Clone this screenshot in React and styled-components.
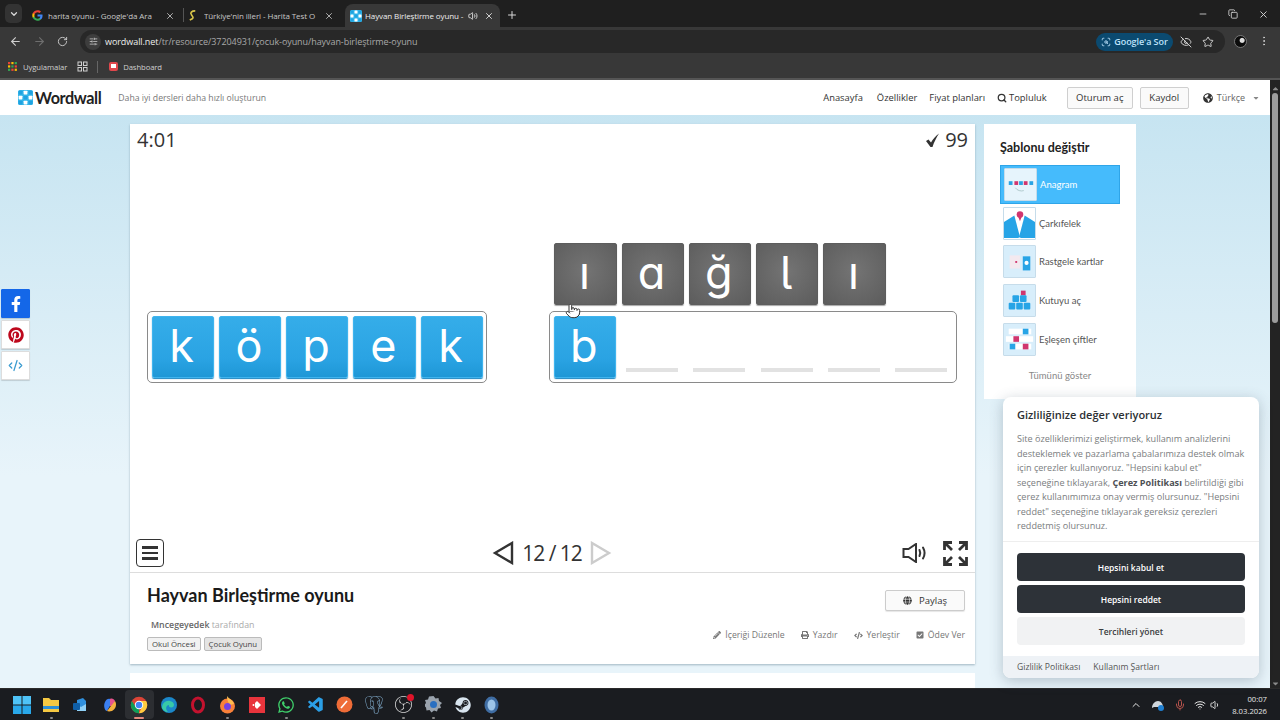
import styled, { createGlobalStyle } from "styled-components";
import {
  ArrowLeft,
  ArrowRight,
  ChevronDown,
  ChevronUp,
  CodeXml,
  Copy,
  EyeOff,
  Mic,
  Minus,
  MoreVertical,
  Plus,
  Pointer,
  RotateCw,
  ScanSearch,
  Search,
  SlidersHorizontal,
  Star,
  Volume1,
  Volume2,
  Wifi,
  X,
} from "lucide-react";
import {
  FaCaretDown,
  FaCaretUp,
  FaCheckSquare,
  FaCode,
  FaFacebookF,
  FaGlobe,
  FaGlobeAmericas,
  FaPencilAlt,
  FaPinterest,
  FaPrint,
  FaSteam,
  FaWhatsapp,
} from "react-icons/fa";
import { SiObsstudio, SiPostgresql } from "react-icons/si";
import { VscVscode } from "react-icons/vsc";

const UI = `"Open Sans", "Noto Sans", "Liberation Sans", sans-serif`;
const ROUND = `Lato, "Open Sans", sans-serif`;

const GlobalStyle = createGlobalStyle`
  html, body {
    margin: 0;
    height: 100%;
    overflow: hidden;
    font-family: ${UI};
  }
  * { box-sizing: border-box; }
`;

const Screen = styled.div`
  width: 1280px;
  height: 720px;
  display: flex;
  flex-direction: column;
  overflow: hidden;
  background: #1c1c1c;
`;

/* browser chrome */
const TabStrip = styled.div`
  height: 27px;
  background: #1f1f1f;
  display: flex;
  align-items: flex-end;
  color: #d8d8d8;
  font-size: 8px;
  letter-spacing: -0.1px;
  padding-left: 5px;
`;

const TabMenu = styled.div`
  width: 17px;
  height: 19px;
  margin-bottom: 4px;
  border-radius: 5px;
  background: #333;
  display: flex;
  align-items: center;
  justify-content: center;
`;

const Tab = styled.div`
  width: ${(p) => p.$width}px;
  height: 23px;
  margin-left: ${(p) => p.$left || 0}px;
  padding: 0 ${(p) => p.$padRight}px 0 ${(p) => p.$pad}px;
  display: flex;
  align-items: center;
  gap: ${(p) => p.$gap || 5}px;
  border-radius: 8px 8px 0 0;
  background: ${(p) => (p.$active ? "#383838" : "transparent")};
  color: ${(p) => (p.$active ? "#eee" : "#c8c8c8")};
`;

const TabTitle = styled.span`
  flex: 1;
  white-space: nowrap;
  overflow: hidden;
`;

const TabDivider = styled.div`
  width: 1px;
  height: 14px;
  margin: 0 0 5px 0;
  background: #555;
`;

const NewTab = styled.div`
  margin: 0 0 6px 6px;
  display: flex;
`;

const WindowButtons = styled.div`
  margin-left: auto;
  margin-bottom: 7px;
  display: flex;
  gap: 20px;
  padding-right: 11px;
`;

const Toolbar = styled.div`
  height: 28px;
  background: #383838;
  display: flex;
  align-items: center;
  color: #cfcfcf;
  padding-left: 9px;
`;

const NavIcons = styled.div`
  width: 71px;
  display: flex;
  gap: 11px;
`;

const Omnibox = styled.div`
  width: 1145px;
  height: 23px;
  margin-top: 1px;
  border-radius: 12px;
  background: #282828;
  display: flex;
  align-items: center;
  padding: 0 11px 0 5px;
  font-size: 9px;
  letter-spacing: -0.07px;
`;

const SiteInfo = styled.div`
  width: 16px;
  height: 16px;
  border-radius: 50%;
  background: #3d3d3d;
  display: flex;
  align-items: center;
  justify-content: center;
  margin-right: 4px;
`;

const Url = styled.span`
  color: #a9a9a9;
  b { color: #eee; font-weight: 400; }
`;

const AskGoogle = styled.div`
  margin-left: auto;
  width: 77px;
  height: 18px;
  border-radius: 9px;
  background: #0b4a70;
  color: #bfe3fb;
  font-size: 9px;
  font-weight: 600;
  display: flex;
  align-items: center;
  justify-content: center;
  gap: 3px;
  margin-right: 7px;
`;

const OmniIcons = styled.div`
  display: flex;
  gap: 10px;
`;

const Profile = styled.div`
  width: 13px;
  height: 13px;
  margin-left: 9px;
  border-radius: 50%;
  background: radial-gradient(circle at 65% 40%, #ddd 0 2px, #0c0c0c 3px);
  border: 1px solid #777;
`;

const BookmarkBar = styled.div`
  height: 25px;
  background: #383838;
  border-bottom: 2px solid #555;
  display: flex;
  align-items: center;
  color: #cfcfcf;
  font-size: 7.7px;
  letter-spacing: -0.1px;
  padding-left: 8px;
`;

const Bookmark = styled.div`
  display: flex;
  align-items: center;
  gap: ${(p) => p.$iconGap || 5}px;
  margin-right: ${(p) => p.$gap || 0}px;
`;

const BookmarkDivider = styled.div`
  width: 1px;
  height: 12px;
  background: #666;
  margin: 0 10px 0 9px;
`;

/* page */
const Viewport = styled.div`
  position: relative;
  flex: 1;
  min-height: 0;
  display: flex;
`;

const Page = styled.div`
  width: 1270px;
  display: flex;
  flex-direction: column;
  background: linear-gradient(180deg, #c6e4f1 5%, #e8f4fa 65%);
  overflow: hidden;
`;

const ScrollTrack = styled.div`
  width: 10px;
  background: #232323;
  display: flex;
  flex-direction: column;
  align-items: center;
  justify-content: space-between;
  color: #8a8a8a;
  padding: 4px 0 0;
`;

const ScrollThumb = styled.div`
  width: 6px;
  height: 230px;
  border-radius: 3px;
  background: #9c9c9c;
`;

const ScrollTop = styled.div`
  display: flex;
  flex-direction: column;
  align-items: center;
`;

const Header = styled.header`
  flex: none;
  height: 35px;
  background: #fff;
  display: flex;
  align-items: center;
  padding: 0 10px 0 18px;
`;

const Logo = styled.div`
  display: flex;
  align-items: center;
  gap: 2px;
  font: 700 16.2px ${ROUND};
  letter-spacing: -0.4px;
  color: #222;
`;

const Tagline = styled.span`
  margin-left: 17px;
  font-size: 8.7px;
  color: #777;
`;

const Nav = styled.nav`
  margin-left: auto;
  display: flex;
  align-items: center;
  font-size: 9.4px;
  color: #333;
`;

const NavLink = styled.a`
  margin-right: ${(p) => p.$gap}px;
  display: flex;
  align-items: center;
  gap: 2px;
`;

const HeaderButton = styled.button`
  height: 22px;
  width: ${(p) => p.$width}px;
  margin-left: ${(p) => p.$left}px;
  border: 1px solid #cfcfcf;
  border-radius: 2px;
  background: #fafafa;
  font: 400 9.5px ${UI};
  color: #333;
  padding: 0;
`;

const Language = styled.div`
  margin-left: 14px;
  display: flex;
  align-items: center;
  gap: 4px;
  font-size: 9px;
  color: #666;
`;

const Main = styled.main`
  flex: 1;
  display: flex;
  gap: 9px;
  padding: 9px 0 0 130px;
  min-height: 0;
`;

const Column = styled.div`
  width: 845px;
  display: flex;
  flex-direction: column;
  gap: 9px;
`;

const Card = styled.section`
  flex: none;
  width: 100%;
  height: 540px;
  background: #fff;
  display: flex;
  flex-direction: column;
  box-shadow: 0 1px 2px rgba(90, 120, 140, 0.5);
`;

const NextCard = styled.div`
  flex: 1;
  background: #fff;
`;

const Game = styled.div`
  height: 449px;
  display: flex;
  flex-direction: column;
  border-bottom: 1px solid #ddd;
`;

const GameTop = styled.div`
  height: 34px;
  padding: 4px 7px 0;
  display: flex;
  justify-content: space-between;
  font: 400 20px/24px ${UI};
  color: #333;
`;

const Score = styled.div`
  display: flex;
  align-items: center;
  gap: 5px;
  height: 24px;
`;

const Stage = styled.div`
  flex: 1;
  display: flex;
  align-items: flex-start;
  gap: 62px;
  padding: 85px 0 0 17px;
`;

const WordBox = styled.div`
  display: flex;
  gap: 5px;
  height: 72px;
  padding: 3.5px 3.5px 3.5px 3.5px;
  border: 1.5px solid #8a8a8a;
  border-radius: 5px;
`;

const LeftWord = styled.div`
  padding-top: 68px;
`;

const RightWord = styled.div`
  position: relative;
  display: flex;
  flex-direction: column;
  gap: 6px;
`;

const LooseLetters = styled.div`
  display: flex;
  gap: 5px;
  padding-left: 5px;
`;

const Tile = styled.div`
  width: 62.25px;
  height: 62px;
  flex: none;
  border-radius: 2px;
  display: flex;
  align-items: center;
  justify-content: center;
  color: #fff;
  font: 400 45px Inter, ${ROUND};
  font-feature-settings: "cv11", "cv05";
  line-height: 1;
  padding: 0 2px 3px 0;
  background: ${(p) =>
    p.$gray
      ? "radial-gradient(circle at 50% 45%, #747474, #5c5c5c)"
      : "linear-gradient(180deg, #35ade9, #2aa3e3 70%, #1e97d6)"};
  border: 1px solid ${(p) => (p.$gray ? "#5d5d5d" : "#3fb4ee")};
  box-shadow: 0 1px 1px ${(p) => (p.$gray ? "rgba(0,0,0,0.35)" : "#1a86c2")};
`;

const Slot = styled.div`
  width: 62.25px;
  height: 62px;
  flex: none;
  display: flex;
  align-items: flex-end;
  justify-content: center;
  padding-bottom: 6px;
  &::after {
    content: "";
    width: 52px;
    height: 4px;
    background: #e2e2e2;
  }
`;

const Cursor = styled(Pointer)`
  position: absolute;
  left: 16px;
  top: 60px;
`;

const Controls = styled.div`
  height: 28px;
  margin-bottom: 5px;
  padding: 0 7px 0 6px;
  display: grid;
  grid-template-columns: 1fr auto 1fr;
  align-items: center;
`;

const MenuButton = styled.div`
  width: 28px;
  height: 28px;
  border: 1.5px solid #333;
  border-radius: 4px;
  display: flex;
  flex-direction: column;
  justify-content: center;
  gap: 3px;
  padding: 0 5px;
  span {
    height: 2.5px;
    background: #333;
  }
`;

const Pager = styled.div`
  display: flex;
  align-items: center;
  gap: 8px;
  font: 400 21px ${UI};
  letter-spacing: -1px;
  color: #333;
`;

const GameIcons = styled.div`
  justify-self: end;
  display: flex;
  align-items: center;
  gap: 15px;
  color: #333;
`;

const Info = styled.div`
  flex: 1;
  display: grid;
  grid-template-columns: 1fr auto;
  grid-template-rows: auto 1fr;
  padding: 11px 10px 13px 17px;
`;

const GameTitle = styled.h1`
  margin: 0;
  font: 700 18px/22px ${ROUND};
  color: #1a1a1a;
`;

const ShareButton = styled.button`
  justify-self: end;
  width: 80px;
  height: 21px;
  margin-top: 6px;
  border: 1px solid #ccc;
  border-radius: 2px;
  background: #fafafa;
  font: 400 9.5px ${UI};
  color: #333;
  display: flex;
  align-items: center;
  justify-content: center;
  gap: 7px;
  box-shadow: 0 1px 1px rgba(0, 0, 0, 0.1);
`;

const Meta = styled.div`
  align-self: end;
`;

const Author = styled.div`
  padding-left: 4px;
  margin-bottom: 6px;
  font-size: 8.8px;
  font-weight: 600;
  color: #666;
  span {
    font-weight: 400;
    color: #aaa;
  }
`;

const Tags = styled.div`
  display: flex;
  gap: 3px;
`;

const TagChip = styled.span`
  height: 14px;
  padding: 0 4px;
  border: 1px solid #bbb;
  border-radius: 2px;
  background: ${(p) => (p.$dark ? "#e4e4e4" : "#f2f2f2")};
  font-size: 7.8px;
  line-height: 12px;
  color: #444;
`;

const Actions = styled.div`
  align-self: end;
  margin-bottom: 10px;
  display: flex;
  gap: 16px;
  font-size: 8.7px;
  color: #777;
`;

const Action = styled.a`
  display: flex;
  align-items: center;
  gap: 4px;
`;

const Sidebar = styled.aside`
  width: 152px;
  height: 275px;
  background: #fff;
  padding: 16px 16px 0;
`;

const SidebarTitle = styled.h2`
  margin: 0 0 9px;
  font: 700 12.5px/16px ${ROUND};
  color: #222;
`;

const TemplateRow = styled.div`
  width: 120px;
  height: 38.8px;
  padding-left: 3px;
  display: flex;
  align-items: center;
  gap: 3px;
  font: 400 9.5px ${ROUND};
  color: ${(p) => (p.$active ? "#fff" : "#555")};
  background: ${(p) => (p.$active ? "#45bbfc" : "transparent")};
  border: ${(p) => (p.$active ? "1px solid #2fa5e8" : "none")};
`;

const Thumb = styled.svg`
  flex: none;
  border: 1px solid #c6dcea;
  border-radius: 1px;
`;

const ShowAll = styled.div`
  width: 120px;
  margin-top: 11px;
  text-align: center;
  font: 400 9.5px ${ROUND};
  color: #888;
`;

const ShareRail = styled.div`
  position: absolute;
  left: 1px;
  top: 209px;
  display: flex;
  flex-direction: column;
  gap: 2px;
`;

const ShareTile = styled.div`
  width: 29px;
  height: 29px;
  display: flex;
  align-items: center;
  justify-content: center;
  background: ${(p) => p.$bg || "#fff"};
  color: ${(p) => p.$color};
  border: 1px solid ${(p) => (p.$bg ? p.$bg : "#ddd")};
  border-radius: 1px;
  box-shadow: 0 1px 1px rgba(0, 0, 0, 0.15);
`;

/* cookie dialog */
const CookieDialog = styled.div`
  position: absolute;
  left: 1003px;
  top: 317px;
  width: 256px;
  height: 281px;
  border-radius: 8px;
  background: #fff;
  overflow: hidden;
  display: flex;
  flex-direction: column;
  box-shadow: 0 3px 14px rgba(60, 80, 100, 0.3);
`;

const CookieBody = styled.div`
  padding: 10px 10px 10px 14px;
  border-bottom: 1px solid #eee;
  height: 145px;
`;

const CookieTitle = styled.h3`
  margin: 0 0 9px;
  font: 600 11px/16px ${UI};
  color: #2c2f33;
`;

const CookieText = styled.p`
  margin: 0;
  font-size: 9.1px;
  line-height: 14.5px;
  white-space: nowrap;
  color: #7a7d80;
  b { color: #4d5054; font-weight: 700; }
`;

const CookieButtons = styled.div`
  padding: 11px 14px 0;
  display: flex;
  flex-direction: column;
  gap: 4px;
`;

const CookieButton = styled.button`
  height: 28px;
  border: none;
  border-radius: 4px;
  background: ${(p) => (p.$light ? "#f1f2f3" : "#2d3238")};
  color: ${(p) => (p.$light ? "#3a3d40" : "#fff")};
  font: 600 8.5px ${UI};
  padding: 0;
`;

const CookieFooter = styled.div`
  margin-top: auto;
  height: 22px;
  background: #eef2f6;
  padding: 0 14px;
  display: flex;
  align-items: center;
  gap: 13px;
  font-size: 8.6px;
  color: #555;
`;

/* taskbar */
const Taskbar = styled.footer`
  flex: none;
  height: 32px;
  background: #1a1c20;
  display: flex;
  align-items: center;
  padding-left: 7px;
  border-top: 1px solid #2a2a2a;
`;

const TaskSlot = styled.div`
  position: relative;
  width: 29.4px;
  height: 29px;
  display: flex;
  align-items: center;
  justify-content: center;
  border-radius: 4px;
  color: ${(p) => p.$color || "#fff"};
  background: ${(p) => (p.$active ? "#2c2e32" : "transparent")};
  &::after {
    content: "";
    position: absolute;
    bottom: 0;
    left: 50%;
    display: ${(p) => (p.$dot ? "block" : "none")};
    width: ${(p) => (p.$active ? 10 : 3)}px;
    height: 2px;
    margin-left: ${(p) => (p.$active ? -5 : -1.5)}px;
    border-radius: 1px;
    background: ${(p) => (p.$active ? "#e58a7c" : "#888")};
  }
`;

const RedBadge = styled.span`
  position: absolute;
  top: 4px;
  right: 4px;
  width: 7px;
  height: 7px;
  border-radius: 50%;
  background: #e0142a;
`;

const Tray = styled.div`
  margin-left: auto;
  display: flex;
  align-items: center;
  color: #e6e6e6;
  padding-right: 13px;
`;

const TrayIcon = styled.div`
  width: ${(p) => p.$width}px;
  display: flex;
  justify-content: center;
`;

const Clock = styled.div`
  margin-left: 11px;
  text-align: right;
  font-size: 7.7px;
  line-height: 12px;
  color: #e6e6e6;
`;

function GoogleMark({ size = 11 }) {
  return (
    <svg width={size} height={size} viewBox="0 0 24 24">
      <path fill="#4285f4" d="M23 12.300c0-.8-.1-1.600-.2-2.300H12v4.400h6.200c-.3 1.400-1.100 2.600-2.300 3.400v2.800h3.700c2.100-2 3.400-4.900 3.400-8.300z" />
      <path fill="#34a853" d="M12 23.500c3.100 0 5.700-1 7.600-2.800l-3.700-2.900c-1 .7-2.300 1.100-3.900 1.100-3 0-5.500-2-6.400-4.800H1.800v3c1.900 3.800 5.800 6.400 10.200 6.400z" />
      <path fill="#fbbc05" d="M5.600 14.100c-.5-1.400-.5-2.900 0-4.300V6.800H1.800c-1.600 3.200-1.600 7.100 0 10.300z" />
      <path fill="#ea4335" d="M12 4.800c1.700 0 3.200.6 4.400 1.700l3.300-3.300C17.700 1.400 15.100.4 12 .4 7.600.4 3.700 3 1.800 6.800l3.800 3C6.500 6.900 9 4.800 12 4.800z" />
    </svg>
  );
}

function WordwallMark({ size = 12 }) {
  const cells = [
    [1, 1, "#1fa2e0"],
    [9, 1, "#fff"],
    [17, 1, "#1fa2e0"],
    [1, 9, "#fff"],
    [9, 9, "#1fa2e0"],
    [17, 9, "#fff"],
    [1, 17, "#1fa2e0"],
    [9, 17, "#fff"],
    [17, 17, "#1fa2e0"],
  ];
  return (
    <svg width={size} height={size} viewBox="0 0 24 24">
      <rect width="24" height="24" rx="3" fill="#35b6ea" />
      {cells.map(([x, y, fill]) => (
        <rect key={`${x}-${y}`} x={x} y={y} width="6" height="6" rx="1" fill={fill} />
      ))}
    </svg>
  );
}

function ChromeMark() {
  return (
    <svg width="18" height="18" viewBox="0 0 24 24">
      <circle cx="12" cy="12" r="11" fill="#db4437" />
      <path fill="#0f9d58" d="M12 23a11 11 0 0 1-9.500-16.500L8 15l4 2z" />
      <path fill="#ffcd40" d="M12 23a11 11 0 0 0 9.500-16.500H12l4 8z" />
      <circle cx="12" cy="12" r="5.600" fill="#fff" />
      <circle cx="12" cy="12" r="4.300" fill="#4285f4" />
    </svg>
  );
}

function TemplateThumb({ kind }) {
  return (
    <Thumb width="33" height="33" viewBox="0 0 33 33">
      <rect width="33" height="33" fill={kind === "anagram" ? "#e6f4fc" : "#d8eefb"} />
      {kind === "anagram" && (
        <>
          {[4, 10, 15, 20, 26].map((x, i) => (
            <rect key={x} x={x} y="13" width="4" height="4" fill={i % 2 ? "#d0366f" : "#2aa3e3"} />
          ))}
          <path d="M11 20c2 3 6 4 9 3" stroke="#8aa" strokeWidth="0.6" fill="none" />
        </>
      )}
      {kind === "wheel" && (
        <>
          <rect width="33" height="33" fill="#fff" />
          <path d="M0 15 11 8l6 23-2 1H0z" fill="#27a4e6" />
          <path d="M33 15 22 8l-6 23 2 1h15z" fill="#27a4e6" />
          <circle cx="17" cy="7" r="3.500" fill="#d0366f" />
          <path d="M15 9l2 5 2-5z" fill="#d0366f" />
        </>
      )}
      {kind === "cards" && (
        <>
          <rect x="6" y="10" width="11" height="14" fill="#f3e9ef" />
          <rect x="12" y="16" width="2" height="2" fill="#d0366f" />
          <rect x="20" y="11" width="8" height="15" fill="#27a4e6" />
          <circle cx="24" cy="18" r="2.200" fill="#fff" />
        </>
      )}
      {kind === "boxes" && (
        <>
          <rect x="18" y="6" width="5" height="5" fill="#d0366f" />
          {[[9, 11], [17, 11], [5, 19], [13, 19], [21, 19]].map(([x, y]) => (
            <rect key={`${x}${y}`} x={x} y={y} width="7" height="7" rx="1" fill="#27a4e6" />
          ))}
        </>
      )}
      {kind === "pairs" && (
        <>
          <rect x="5" y="5" width="24" height="6" fill="#fff" />
          <rect x="2" y="13" width="29" height="6" fill="#fff" />
          <rect x="5" y="21" width="24" height="6" fill="#fff" />
          <rect x="20" y="5" width="6" height="6" fill="#27a4e6" />
          <rect x="10" y="13" width="6" height="6" fill="#d0366f" />
          <rect x="6" y="21" width="6" height="6" fill="#27a4e6" />
          <rect x="20" y="21" width="6" height="6" fill="#d0366f" />
        </>
      )}
    </Thumb>
  );
}

const TEMPLATES = [
  { kind: "anagram", name: "Anagram", active: true },
  { kind: "wheel", name: "Çarkıfelek" },
  { kind: "cards", name: "Rastgele kartlar" },
  { kind: "boxes", name: "Kutuyu aç" },
  { kind: "pairs", name: "Eşleşen çiftler" },
];

export default function App() {
  return (
    <Screen>
      <GlobalStyle />
      <TabStrip>
        <TabMenu>
          <ChevronDown size={10} strokeWidth={3} />
        </TabMenu>
        <Tab $width={157} $left={4} $pad={6} $padRight={8}>
          <GoogleMark />
          <TabTitle>harita oyunu - Google'da Ara</TabTitle>
          <X size={10} />
        </Tab>
        <TabDivider />
        <Tab $width={161} $pad={3} $padRight={11} $gap={6}>
          <svg width="11" height="11" viewBox="0 0 12 12">
            <path d="M9 1C5 1 3 3 5 5.500S8 9 3 11" stroke="#d9c64a" strokeWidth="1.800" fill="none" />
          </svg>
          <TabTitle>Türkiye'nin illeri - Harita Test O</TabTitle>
          <X size={10} />
        </Tab>
        <Tab $width={155} $pad={5} $padRight={6} $gap={3} $active>
          <WordwallMark />
          <TabTitle>Hayvan Birleştirme oyunu -</TabTitle>
          <Volume2 size={10} />
          <X size={10} style={{ marginLeft: 3 }} />
        </Tab>
        <NewTab>
          <Plus size={12} />
        </NewTab>
        <WindowButtons>
          <Minus size={10} />
          <Copy size={10} />
          <X size={11} />
        </WindowButtons>
      </TabStrip>

      <Toolbar>
        <NavIcons>
          <ArrowLeft size={13} />
          <ArrowRight size={13} color="#6e6e6e" />
          <RotateCw size={11} style={{ marginTop: 1 }} />
        </NavIcons>
        <Omnibox>
          <SiteInfo>
            <SlidersHorizontal size={9} />
          </SiteInfo>
          <Url>
            <b>wordwall.net</b>/tr/resource/37204931/çocuk-oyunu/hayvan-birleştirme-oyunu
          </Url>
          <AskGoogle>
            <ScanSearch size={10} />
            Google'a Sor
          </AskGoogle>
          <OmniIcons>
            <EyeOff size={12} />
            <Star size={12} />
          </OmniIcons>
        </Omnibox>
        <Profile />
        <MoreVertical size={12} style={{ marginLeft: 11 }} />
      </Toolbar>

      <BookmarkBar>
        <Bookmark $gap={10}>
          <svg width="10" height="10" viewBox="0 0 9 9">
            {[0, 3, 6].flatMap((x, i) =>
              [0, 3, 6].map((y, j) => (
                <rect
                  key={`${x}${y}`}
                  x={x}
                  y={y}
                  width="2"
                  height="2"
                  fill={["#ea4335", "#fbbc05", "#34a853"][(i + j) % 3]}
                />
              ))
            )}
          </svg>
          Uygulamalar
        </Bookmark>
        <svg width="11" height="11" viewBox="0 0 11 11" fill="none" stroke="#cfcfcf">
          <rect x="1" y="1" width="3.500" height="3.500" />
          <rect x="6.500" y="1" width="3.500" height="3.500" />
          <rect x="1" y="6.500" width="3.500" height="3.500" />
          <rect x="6.500" y="6.500" width="3.500" height="3.500" />
        </svg>
        <BookmarkDivider />
        <Bookmark $iconGap={4}>
          <svg width="11" height="11" viewBox="0 0 11 11">
            <rect x="1" y="1" width="9" height="9" rx="2" fill="#e0474c" />
            <rect x="3" y="3" width="5" height="4" fill="#fff" />
          </svg>
          Dashboard
        </Bookmark>
      </BookmarkBar>

      <Viewport>
        <Page>
          <Header>
            <Logo>
              <WordwallMark size={15} />
              Wordwall
            </Logo>
            <Tagline>Daha iyi dersleri daha hızlı oluşturun</Tagline>
            <Nav>
              <NavLink $gap={14}>Anasayfa</NavLink>
              <NavLink $gap={12}>Özellikler</NavLink>
              <NavLink $gap={12}>Fiyat planları</NavLink>
              <NavLink $gap={0}>
                <Search size={10} strokeWidth={3} />
                Topluluk
              </NavLink>
              <HeaderButton $width={66} $left={20}>Oturum aç</HeaderButton>
              <HeaderButton $width={49} $left={7}>Kaydol</HeaderButton>
              <Language>
                <FaGlobeAmericas size={10} color="#333" />
                Türkçe
                <FaCaretDown size={8} color="#888" style={{ marginLeft: 3 }} />
              </Language>
            </Nav>
          </Header>

          <Main>
            <Column>
              <Card>
                <Game>
                  <GameTop>
                    <span>4:01</span>
                    <Score>
                      <svg width="14" height="14" viewBox="0 0 14 14" fill="#333">
                        <path d="M0 8l2.500-1.500L5 9.500C7 6 9.500 3 13 .5 10.500 4.500 8 9 6.500 14H4.500z" />
                      </svg>
                      99
                    </Score>
                  </GameTop>
                  <Stage>
                    <LeftWord>
                      <WordBox>
                        {["k", "ö", "p", "e", "k"].map((letter, i) => (
                          <Tile key={i}>{letter}</Tile>
                        ))}
                      </WordBox>
                    </LeftWord>
                    <RightWord>
                      <LooseLetters>
                        {["ı", "a", "ğ", "l", "ı"].map((letter, i) => (
                          <Tile key={i} $gray>{letter}</Tile>
                        ))}
                      </LooseLetters>
                      <WordBox>
                        <Tile>b</Tile>
                        {[0, 1, 2, 3, 4].map((i) => (
                          <Slot key={i} />
                        ))}
                      </WordBox>
                      <Cursor size={16} fill="#fff" stroke="#333" strokeWidth={1.5} />
                    </RightWord>
                  </Stage>
                  <Controls>
                    <MenuButton>
                      <span />
                      <span />
                      <span />
                    </MenuButton>
                    <Pager>
                      <svg width="22" height="24" viewBox="0 0 22 24" fill="none" stroke="#333" strokeWidth="2.400">
                        <path d="M20 2v20L3 12z" />
                      </svg>
                      12 / 12
                      <svg width="22" height="24" viewBox="0 0 22 24" fill="none" stroke="#ccc" strokeWidth="2.400">
                        <path d="M2 2v20l17-10z" />
                      </svg>
                    </Pager>
                    <GameIcons>
                      <svg width="26" height="20" viewBox="0 0 26 20" fill="none" stroke="#333" strokeWidth="2">
                        <path d="M1.500 6h5L14 1v18l-7.500-5h-5z" />
                        <path d="M17.500 7c1 2 1 4 0 6M21 4.500c2 3.500 2 7.500 0 11" strokeLinecap="round" />
                      </svg>
                      <svg width="25" height="25" viewBox="0 0 25 25" fill="none" stroke="#333" strokeWidth="2.800">
                        <path d="M1.500 9V1.500H9M1.500 1.500l7.500 7.500M23.500 9V1.500H16M23.500 1.500L16 9M1.500 16v7.500H9M1.500 23.500L9 16M23.500 16v7.500H16M23.500 23.500L16 16" />
                      </svg>
                    </GameIcons>
                  </Controls>
                </Game>
                <Info>
                  <GameTitle>Hayvan Birleştirme oyunu</GameTitle>
                  <ShareButton>
                    <FaGlobe size={9} />
                    Paylaş
                  </ShareButton>
                  <Meta>
                    <Author>
                      Mncegeyedek <span>tarafından</span>
                    </Author>
                    <Tags>
                      <TagChip>Okul Öncesi</TagChip>
                      <TagChip $dark>Çocuk Oyunu</TagChip>
                    </Tags>
                  </Meta>
                  <Actions>
                    <Action>
                      <FaPencilAlt size={8} />
                      İçeriği Düzenle
                    </Action>
                    <Action>
                      <FaPrint size={8} />
                      Yazdır
                    </Action>
                    <Action>
                      <FaCode size={9} />
                      Yerleştir
                    </Action>
                    <Action>
                      <FaCheckSquare size={8} />
                      Ödev Ver
                    </Action>
                  </Actions>
                </Info>
              </Card>
              <NextCard />
            </Column>

            <Sidebar>
              <SidebarTitle>Şablonu değiştir</SidebarTitle>
              {TEMPLATES.map((t) => (
                <TemplateRow key={t.kind} $active={t.active}>
                  <TemplateThumb kind={t.kind} />
                  {t.name}
                </TemplateRow>
              ))}
              <ShowAll>Tümünü göster</ShowAll>
            </Sidebar>
          </Main>
        </Page>

        <ScrollTrack>
          <ScrollTop>
            <FaCaretUp size={9} />
            <ScrollThumb />
          </ScrollTop>
          <FaCaretDown size={9} />
        </ScrollTrack>

        <ShareRail>
          <ShareTile $bg="#1467e8" $color="#fff">
            <FaFacebookF size={16} />
          </ShareTile>
          <ShareTile $color="#bd081c">
            <FaPinterest size={16} />
          </ShareTile>
          <ShareTile $color="#3a9bd0">
            <CodeXml size={15} />
          </ShareTile>
        </ShareRail>

        <CookieDialog>
          <CookieBody>
            <CookieTitle>Gizliliğinize değer veriyoruz</CookieTitle>
            <CookieText>
              Site özelliklerimizi geliştirmek, kullanım analizlerini
              <br />
              desteklemek ve pazarlama çabalarımıza destek olmak
              <br />
              için çerezler kullanıyoruz. "Hepsini kabul et"
              <br />
              seçeneğine tıklayarak, <b>Çerez Politikası</b> belirtildiği gibi
              <br />
              çerez kullanımımıza onay vermiş olursunuz. "Hepsini
              <br />
              reddet" seçeneğine tıklayarak gereksiz çerezleri
              <br />
              reddetmiş olursunuz.
            </CookieText>
          </CookieBody>
          <CookieButtons>
            <CookieButton>Hepsini kabul et</CookieButton>
            <CookieButton>Hepsini reddet</CookieButton>
            <CookieButton $light>Tercihleri yönet</CookieButton>
          </CookieButtons>
          <CookieFooter>
            <span>Gizlilik Politikası</span>
            <span>Kullanım Şartları</span>
          </CookieFooter>
        </CookieDialog>
      </Viewport>

      <Taskbar>
        <TaskSlot>
          <svg width="18" height="18" viewBox="0 0 18 18" fill="#4fc3f7">
            <rect width="8.500" height="8.500" />
            <rect x="9.500" width="8.500" height="8.500" />
            <rect y="9.500" width="8.500" height="8.500" fill="#29a8ea" />
            <rect x="9.500" y="9.500" width="8.500" height="8.500" fill="#29a8ea" />
          </svg>
        </TaskSlot>
        <TaskSlot $dot>
          <svg width="18" height="16" viewBox="0 0 18 16">
            <path d="M1 1h6l2 2h8v12H1z" fill="#f5c842" />
            <rect x="1" y="9" width="16" height="3" fill="#2d8fd5" />
          </svg>
        </TaskSlot>
        <TaskSlot>
          <svg width="16" height="16" viewBox="0 0 16 16">
            <path d="M5 3l6-2 3 3v10H5z" fill="#2f8fdd" />
            <path d="M5 7l4 3 5-3v7H5z" fill="#8fd0f7" />
            <rect x="1" y="6" width="7" height="7" rx="1" fill="#0f5fa8" />
          </svg>
        </TaskSlot>
        <TaskSlot>
          <svg width="16" height="16" viewBox="0 0 16 16">
            <path d="M3 5c1-3 4-4 5-3l1 5-4 7c-2 0-4-5-2-9z" fill="#3b7ff0" />
            <path d="M8 2c2-1 4 0 5 2l-2 6-3-1z" fill="#e6548e" />
            <path d="M13 4c2 3 1 8-3 10-2 .5-4 .5-5 0l4-5z" fill="#f5b13d" />
          </svg>
        </TaskSlot>
        <TaskSlot $active $dot>
          <ChromeMark />
        </TaskSlot>
        <TaskSlot>
          <svg width="18" height="18" viewBox="0 0 18 18">
            <circle cx="9" cy="9" r="8" fill="#1b87c9" />
            <path d="M2 12c0-5 4-8 8-7s5 4 3 6c-2 1-5 0-4-2-3 0-4 4-1 7-3 0-5-2-6-4z" fill="#38c9a7" />
          </svg>
        </TaskSlot>
        <TaskSlot>
          <svg width="16" height="18" viewBox="0 0 16 18" fill="none" stroke="#c3122e" strokeWidth="3">
            <ellipse cx="8" cy="9" rx="5.500" ry="7" />
          </svg>
        </TaskSlot>
        <TaskSlot $dot>
          <svg width="17" height="18" viewBox="0 0 17 18">
            <circle cx="8.500" cy="10" r="7.500" fill="#f9813a" />
            <path d="M8 0c2 3 6 4 7 8l-4 1C9 6 8 4 8 0z" fill="#ffbd4f" />
            <circle cx="8.500" cy="10.500" r="3.500" fill="#7542e5" />
          </svg>
        </TaskSlot>
        <TaskSlot>
          <svg width="16" height="16" viewBox="0 0 16 16">
            <rect width="16" height="16" fill="#e8343c" />
            <path d="M8 4l4 4-4 4-2-2V6z" fill="#fff" />
            <circle cx="4.500" cy="8" r="1" fill="#fff" />
          </svg>
        </TaskSlot>
        <TaskSlot $dot $color="#3fd06b">
          <FaWhatsapp size={18} />
        </TaskSlot>
        <TaskSlot $color="#2b9fe6">
          <VscVscode size={18} />
        </TaskSlot>
        <TaskSlot>
          <svg width="17" height="17" viewBox="0 0 17 17">
            <circle cx="8.500" cy="8.500" r="8" fill="#ef6c37" />
            <path d="M5 12l6-7" stroke="#fff" strokeWidth="1.600" />
          </svg>
        </TaskSlot>
        <TaskSlot $color="#7fa9c9">
          <SiPostgresql size={18} />
        </TaskSlot>
        <TaskSlot $dot $color="#d8d8d8">
          <SiObsstudio size={17} />
          <RedBadge />
        </TaskSlot>
        <TaskSlot $dot>
          <svg width="17" height="17" viewBox="0 0 17 17">
            <path d="M8.500 0l2 2.500 3-.5.500 3 3 2-2 2 1 3-3 .5-1 3-3-1-2.500 2-2-2.500-3 .5-.5-3-2-2 2-2.500-1-3 3-.5 1-3z" fill="#9aa3ad" />
            <circle cx="8.500" cy="8.500" r="3.500" fill="#2a6fc0" />
          </svg>
        </TaskSlot>
        <TaskSlot $dot $color="#d8e4ee">
          <FaSteam size={16} />
        </TaskSlot>
        <TaskSlot $dot>
          <svg width="15" height="18" viewBox="0 0 15 18">
            <ellipse cx="7.500" cy="9" rx="7" ry="8.500" fill="#3f6da3" />
            <ellipse cx="7.500" cy="9" rx="4" ry="5.500" fill="#9cc4e8" />
          </svg>
        </TaskSlot>
        <Tray>
          <TrayIcon $width={22}>
            <ChevronUp size={12} />
          </TrayIcon>
          <TrayIcon $width={22}>
            <svg width="14" height="12" viewBox="0 0 14 12">
              <path d="M1 9c0-4 3-7 6-7s5 3 5 6H3z" fill="#cfd6dc" />
              <circle cx="10" cy="9" r="3" fill="#1f7fd0" />
            </svg>
          </TrayIcon>
          <TrayIcon $width={21}>
            <Mic size={12} color="#b5534c" />
          </TrayIcon>
          <TrayIcon $width={20}>
            <Wifi size={12} />
          </TrayIcon>
          <TrayIcon $width={11}>
            <Volume1 size={12} />
          </TrayIcon>
          <Clock>
            00:07
            <br />
            8.03.2026
          </Clock>
        </Tray>
      </Taskbar>
    </Screen>
  );
}
